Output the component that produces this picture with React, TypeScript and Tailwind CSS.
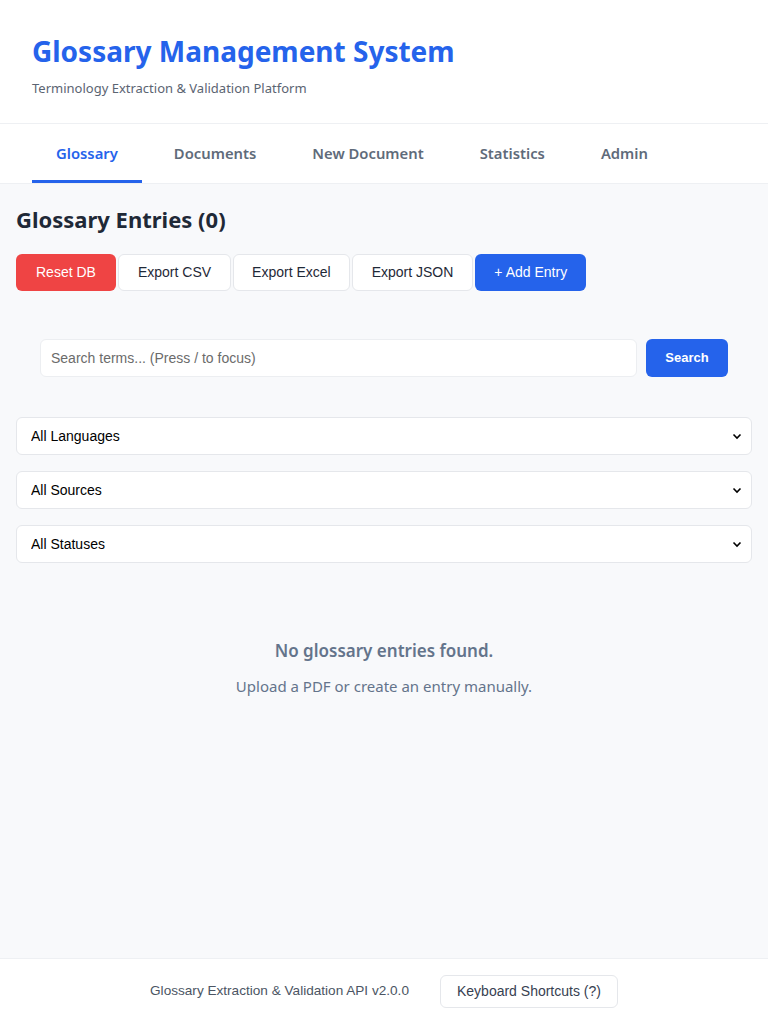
import { useState } from "react";

const tabs = ["Glossary", "Documents", "New Document", "Statistics", "Admin"];

function Chevron() {
  return (
    <svg
      className="pointer-events-none absolute right-[10px] top-1/2 h-[10px] w-[10px] -translate-y-1/2 text-black"
      viewBox="0 0 10 10"
      fill="none"
      stroke="currentColor"
      strokeWidth="1.6"
    >
      <path d="M1.5 3.5 5 7l3.5-3.5" />
    </svg>
  );
}

function FilterSelect({ label }: { label: string }) {
  return (
    <div className="relative">
      <select className="h-[38px] w-full appearance-none rounded-md border border-[#e5e7eb] bg-white px-[14px] font-['Liberation_Sans',Arial,sans-serif] text-[14px] text-black">
        <option>{label}</option>
      </select>
      <Chevron />
    </div>
  );
}

export default function App() {
  const [active, setActive] = useState("Glossary");
  const [query, setQuery] = useState("");

  return (
    <div className="flex min-h-screen flex-col bg-[#f8f9fb] font-['Noto_Sans','Open_Sans',sans-serif]">
      <header className="border-b border-[#eef0f3] bg-white px-8 pb-[25px] pt-[32px]">
        <h1 className="text-[28px] font-bold leading-[38px] text-[#2563eb]">
          Glossary Management System
        </h1>
        <p className="mt-[8px] text-[13px] leading-[20px] text-[#5b6472]">
          Terminology Extraction &amp; Validation Platform
        </p>
      </header>

      <nav className="flex gap-2 border-b border-[#eef0f3] bg-white px-8">
        {tabs.map((tab) => (
          <button
            key={tab}
            type="button"
            onClick={() => setActive(tab)}
            className={
              tab === active
                ? "border-b-[3px] border-[#2563eb] px-6 pb-[16px] pt-[19px] text-[14.8px] font-semibold leading-[21px] text-[#2563eb]"
                : "border-b-[3px] border-transparent px-6 pb-[16px] pt-[19px] text-[14.8px] font-semibold leading-[21px] text-[#5f6b7a]"
            }
          >
            {tab}
          </button>
        ))}
      </nav>

      <main className="flex-1 px-4 pt-[19px]">
        <h2 className="text-[22px] font-bold leading-[32px] text-[#1f2937]">
          Glossary Entries (0)
        </h2>

        <div className="mt-[19px] flex gap-[2px] font-['Liberation_Sans',Arial,sans-serif] text-[14px]">
          <button className="h-[37px] rounded-md bg-[#ef4444] px-5 text-white">
            Reset DB
          </button>
          <button className="h-[37px] rounded-md border border-[#e5e7eb] bg-white px-[19px] text-[#1f2937]">
            Export CSV
          </button>
          <button className="h-[37px] rounded-md border border-[#e5e7eb] bg-white px-[18px] text-[#1f2937]">
            Export Excel
          </button>
          <button className="h-[37px] rounded-md border border-[#e5e7eb] bg-white px-[19px] text-[#1f2937]">
            Export JSON
          </button>
          <button className="h-[37px] rounded-md bg-[#2563eb] px-[19px] text-white">
            + Add Entry
          </button>
        </div>

        <div className="mx-6 mt-[48px] flex gap-[9px] font-['Liberation_Sans',Arial,sans-serif]">
          <input
            value={query}
            onChange={(e) => setQuery(e.target.value)}
            placeholder="Search terms... (Press / to focus)"
            className="h-[38px] flex-1 rounded-md border border-[#eceef1] bg-white px-[10px] text-[14px] text-[#1f2937] placeholder:text-[#6b6b6b]"
          />
          <button className="h-[38px] w-[82px] rounded-md bg-[#2563eb] text-[13px] font-bold text-white">
            Search
          </button>
        </div>

        <div className="mt-[40px] flex flex-col gap-[16px]">
          <FilterSelect label="All Languages" />
          <FilterSelect label="All Sources" />
          <FilterSelect label="All Statuses" />
        </div>

        <div className="pt-[76px] text-center">
          <p className="text-[17px] font-semibold leading-[24px] text-[#64748b]">
            No glossary entries found.
          </p>
          <p className="mt-[12px] text-[15px] leading-[22px] text-[#64748b]">
            Upload a PDF or create an entry manually.
          </p>
        </div>
      </main>

      <footer className="flex items-center justify-center gap-[31px] border-t border-[#eef0f3] bg-white py-[16px] font-['Liberation_Sans',Arial,sans-serif]">
        <span className="text-[13.6px] text-[#4b5563]">
          Glossary Extraction &amp; Validation API v2.0.0
        </span>
        <button className="h-[33px] rounded-md border border-[#e5e7eb] bg-white px-4 text-[14px] text-[#374151]">
          Keyboard Shortcuts (?)
        </button>
      </footer>
    </div>
  );
}
